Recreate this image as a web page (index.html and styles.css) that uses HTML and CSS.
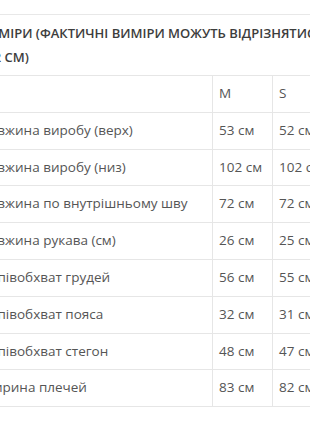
FILE: index.html
```html
<!DOCTYPE html>
<html lang="uk">
<head>
<meta charset="utf-8">
<link rel="stylesheet" href="styles.css">
</head>
<body>
<div class="page">
  <div class="rule"></div>
  <h3 class="title">РОЗМІРИ (ФАКТИЧНІ ВИМІРИ МОЖУТЬ ВІДРІЗНЯТИСЯ<br>НА 2 СМ)</h3>
  <table class="sizes">
    <tr><td class="name"></td><td>M</td><td>S</td><td>L</td></tr>
    <tr><td class="name">Довжина виробу (верх)</td><td>53 см</td><td>52 см</td><td>54 см</td></tr>
    <tr><td class="name">Довжина виробу (низ)</td><td>102 см</td><td>102 см</td><td>103 см</td></tr>
    <tr><td class="name">Довжина по внутрішньому шву</td><td>72 см</td><td>72 см</td><td>73 см</td></tr>
    <tr><td class="name">Довжина рукава (см)</td><td>26 см</td><td>25 см</td><td>27 см</td></tr>
    <tr><td class="name">Напівобхват грудей</td><td>56 см</td><td>55 см</td><td>58 см</td></tr>
    <tr><td class="name">Напівобхват пояса</td><td>32 см</td><td>31 см</td><td>34 см</td></tr>
    <tr><td class="name">Напівобхват стегон</td><td>48 см</td><td>47 см</td><td>50 см</td></tr>
    <tr><td class="name">Ширина плечей</td><td>83 см</td><td>82 см</td><td>85 см</td></tr>
  </table>
</div>
</body>
</html>
```
FILE: styles.css
```css
html, body {
  margin: 0;
  padding: 0;
  overflow: hidden;
  background: #fff;
}
body {
  font-family: "Open Sans", "Noto Sans", sans-serif;
  color: #555;
}
.page {
  margin-left: -27px;
  width: 480px;
  padding-top: 14px;
}
.rule {
  height: 1px;
  background: #e8e8e8;
}
.title {
  margin: 6px 0 6px -1px;
  font-size: 13px;
  line-height: 24px;
  font-weight: 600;
  color: #3d3d3d;
  white-space: nowrap;
}
.sizes {
  border-collapse: collapse;
  font-size: 13.5px;
  color: #555;
}
.sizes td {
  border: 1px solid #e6e6e6;
  padding: 8px 6px;
  line-height: 19.8px;
  white-space: nowrap;
  width: 47px;
}
.sizes td.name {
  width: 226px;
}
```
